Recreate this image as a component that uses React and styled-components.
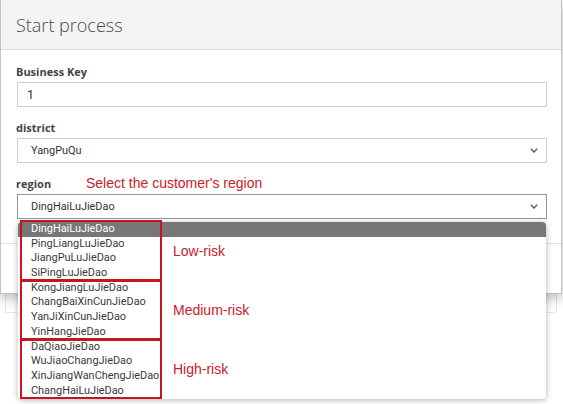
import styled, { createGlobalStyle } from "styled-components";

const GlobalStyle = createGlobalStyle`
  body {
    margin: 0;
    background: #ffffff;
    font-family: Roboto, "Open Sans", sans-serif;
    color: #333;
  }
`;

const Page = styled.div`
  position: relative;
  width: 563px;
  height: 404px;
  overflow: hidden;
  padding: 287px 0 0 5px;
  box-sizing: border-box;
`;

// faint panel behind the modal
const BackPanel = styled.div`
  width: 552px;
  height: 26px;
  border: 1px solid #e8e8e8;
  box-sizing: border-box;
`;

const Modal = styled.div`
  position: absolute;
  top: 0;
  left: 0;
  width: 562px;
  height: 294px;
  box-sizing: border-box;
  background: #fff;
  border: 1px solid #c4c4c4;
  border-top: none;
  box-shadow: 0 4px 12px rgba(0, 0, 0, 0.28);
  display: flex;
  flex-direction: column;
`;

const Header = styled.div`
  height: 50px;
  box-sizing: border-box;
  background: #f4f4f4;
  border-bottom: 1px solid #dcdcdc;
  display: flex;
  align-items: center;
  padding: 0 15px;
  font-family: "Open Sans", sans-serif;
  font-size: 18px;
  font-weight: 300;
  color: #4a4a4a;
`;

const Body = styled.div`
  padding: 13px 15px 0 15px;
  display: flex;
  flex-direction: column;
  height: 193px;
  box-sizing: border-box;
`;

const Footer = styled.div`
  flex: 1;
  border-top: 1px solid #e2e2e2;
`;

const LabelRow = styled.div`
  display: flex;
  align-items: center;
  height: 16px;
  margin-bottom: 3px;
`;

const Label = styled.label`
  font-family: "Open Sans", sans-serif;
  font-size: 11px;
  font-weight: 700;
  color: #444;
  min-width: 70px;
  white-space: nowrap;
`;

const Note = styled.span`
  font-family: "Liberation Sans", Arial, sans-serif;
  font-size: 14px;
  color: #c8202a;
  white-space: nowrap;
`;

const Field = styled.div`
  position: relative;
  height: 25px;
  box-sizing: border-box;
  border: 1px solid ${(p) => (p.focused ? "#8b99a8" : "#cfcfcf")};
  background: #fff;
  display: flex;
  align-items: center;
  justify-content: space-between;
  padding: 0 8px 0 ${(p) => (p.select ? "13px" : "9px")};
  margin-bottom: ${(p) => (p.last ? "0" : "12px")};
  margin-left: 1px;
  width: 530px;
  font-size: ${(p) => (p.select ? "10.9px" : "12.5px")};
  color: #333;
`;

const Chevron = () => (
  <svg width="8" height="5" viewBox="0 0 8 5">
    <polyline points="0.8,0.8 4,4 7.2,0.8" fill="none" stroke="#555" strokeWidth="1.3" />
  </svg>
);

const Dropdown = styled.div`
  position: absolute;
  top: 27px;
  left: 0px;
  width: 528px;
  background: #fff;
  border-radius: 4px;
  box-shadow: 0 1px 6px rgba(0, 0, 0, 0.3);
  padding-bottom: 1px;
`;

const Group = styled.div`
  position: relative;
`;

const Option = styled.div`
  height: 14.7px;
  line-height: 14.7px;
  padding-left: 13px;
  font-size: 10.9px;
  color: ${(p) => (p.active ? "#fff" : "#3a3a3a")};
  background: ${(p) => (p.active ? "#777" : "transparent")};
  border-radius: ${(p) => (p.active ? "4px 4px 0 0" : "0")};
  white-space: nowrap;
`;

const Frame = styled.div`
  position: absolute;
  top: -2px;
  left: 2px;
  width: 142px;
  bottom: -1px;
  border: 2px solid #c8141e;
  box-sizing: border-box;
  pointer-events: none;
`;

const RiskLabel = styled(Note)`
  position: absolute;
  left: 155px;
  top: 50%;
  transform: translateY(-50%);
`;

const groups = [
  {
    risk: "Low-risk",
    items: ["DingHaiLuJieDao", "PingLiangLuJieDao", "JiangPuLuJieDao", "SiPingLuJieDao"],
  },
  {
    risk: "Medium-risk",
    items: ["KongJiangLuJieDao", "ChangBaiXinCunJieDao", "YanJiXinCunJieDao", "YinHangJieDao"],
  },
  {
    risk: "High-risk",
    items: ["DaQiaoJieDao", "WuJiaoChangJieDao", "XinJiangWanChengJieDao", "ChangHaiLuJieDao"],
  },
];

export default function App() {
  return (
    <>
      <GlobalStyle />
      <Page>
        <BackPanel />
        <Modal>
          <Header>Start process</Header>
          <Body>
            <LabelRow>
              <Label>Business Key</Label>
            </LabelRow>
            <Field>1</Field>

            <LabelRow>
              <Label>district</Label>
            </LabelRow>
            <Field select>
              YangPuQu
              <Chevron />
            </Field>

            <LabelRow>
              <Label>region</Label>
              <Note>Select the customer's region</Note>
            </LabelRow>
            <Field select focused last>
              DingHaiLuJieDao
              <Chevron />
              <Dropdown>
                {groups.map((g, gi) => (
                  <Group key={g.risk}>
                    {g.items.map((item, i) => (
                      <Option key={item} active={gi === 0 && i === 0}>
                        {item}
                      </Option>
                    ))}
                    <Frame />
                    <RiskLabel>{g.risk}</RiskLabel>
                  </Group>
                ))}
              </Dropdown>
            </Field>
          </Body>
          <Footer />
        </Modal>
      </Page>
    </>
  );
}
